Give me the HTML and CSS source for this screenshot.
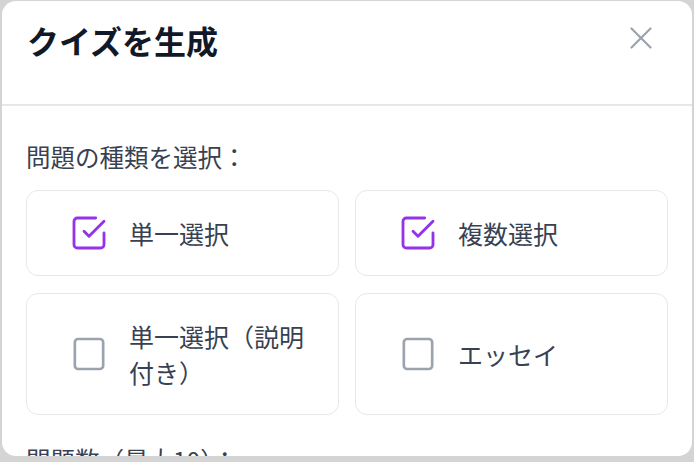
FILE: index.html
```html
<!DOCTYPE html>
<html lang="ja">
<head>
    <meta charset="UTF-8">
    <meta name="viewport" content="width=device-width, initial-scale=1.0">
    <title>クイズを生成</title>
    <link rel="stylesheet" href="styles.css">
</head>
<body>
    <div class="modal">
        <div class="modal-header">
            <h1 class="modal-title">クイズを生成</h1>
            <button class="close-btn" aria-label="閉じる">
                <svg width="22" height="22" viewBox="0 0 22 22" fill="none" stroke="currentColor" stroke-width="2.2" stroke-linecap="round">
                    <line x1="1.5" y1="1.5" x2="20.5" y2="20.5"></line>
                    <line x1="20.5" y1="1.5" x2="1.5" y2="20.5"></line>
                </svg>
            </button>
        </div>
        <div class="modal-body">
            <p class="field-label">問題の種類を選択：</p>
            <div class="type-grid">
                <label class="type-card">
                    <svg class="check checked" width="40" height="40" viewBox="0 0 24 24" fill="none" stroke="currentColor" stroke-width="1.7" stroke-linecap="round" stroke-linejoin="round">
                        <polyline points="9 11 12 14 21 5"></polyline>
                        <path d="M21 12v7a2 2 0 0 1-2 2H5a2 2 0 0 1-2-2V5a2 2 0 0 1 2-2h11"></path>
                    </svg>
                    <span>単一選択</span>
                </label>
                <label class="type-card">
                    <svg class="check checked" width="40" height="40" viewBox="0 0 24 24" fill="none" stroke="currentColor" stroke-width="1.7" stroke-linecap="round" stroke-linejoin="round">
                        <polyline points="9 11 12 14 21 5"></polyline>
                        <path d="M21 12v7a2 2 0 0 1-2 2H5a2 2 0 0 1-2-2V5a2 2 0 0 1 2-2h11"></path>
                    </svg>
                    <span>複数選択</span>
                </label>
                <label class="type-card">
                    <svg class="check" width="40" height="40" viewBox="0 0 24 24" fill="none" stroke="currentColor" stroke-width="1.6" stroke-linecap="round" stroke-linejoin="round">
                        <rect x="3.5" y="3" width="17" height="18" rx="2" ry="2"></rect>
                    </svg>
                    <span>単一選択（説明付き）</span>
                </label>
                <label class="type-card">
                    <svg class="check" width="40" height="40" viewBox="0 0 24 24" fill="none" stroke="currentColor" stroke-width="1.6" stroke-linecap="round" stroke-linejoin="round">
                        <rect x="3.5" y="3" width="17" height="18" rx="2" ry="2"></rect>
                    </svg>
                    <span>エッセイ</span>
                </label>
            </div>
            <p class="field-label">問題数（最大10）：</p>
        </div>
    </div>
</body>
</html>
```

FILE: styles.css
```css
* {
    box-sizing: border-box;
    margin: 0;
    padding: 0;
}
body {
    font-family: 'Noto Sans CJK JP', 'Noto Sans', sans-serif;
    color: #374151;
    background-color: #d4d4d4;
    padding: 1px 2px 6px 2px;
    height: 100vh;
    overflow: hidden;
}

.modal {
    height: 455px;
    background-color: #ffffff;
    border-radius: 14px;
    overflow: hidden;
}

.modal-header {
    display: flex;
    justify-content: space-between;
    align-items: flex-start;
    padding: 19px 40px 44px 25px;
    border-bottom: 2px solid #e5e7eb;
}
.modal-title {
    font-size: 32px;
    font-weight: bold;
    line-height: 40px;
    color: #111827;
}
.close-btn {
    border: none;
    background: none;
    color: #9ca3af;
    margin-top: 7px;
    display: flex;
}

.modal-body {
    padding: 33px 24px 0 24px;
}
.field-label {
    font-size: 24.5px;
    line-height: 36px;
    color: #374151;
    margin-bottom: 15px;
}

.type-grid {
    display: grid;
    grid-template-columns: 1fr 1fr;
    gap: 17px 16px;
    margin-bottom: 27px;
}
.type-card {
    display: flex;
    align-items: center;
    gap: 20px;
    padding: 24px 20px 24px 42px;
    border: 1.5px solid #e5e7eb;
    border-radius: 12px;
    font-size: 25px;
    line-height: 36px;
    color: #374151;
}
.check {
    flex-shrink: 0;
    margin: -2px 0;
    color: #9ca3af;
}
.check.checked {
    color: #9333ea;
}
```
